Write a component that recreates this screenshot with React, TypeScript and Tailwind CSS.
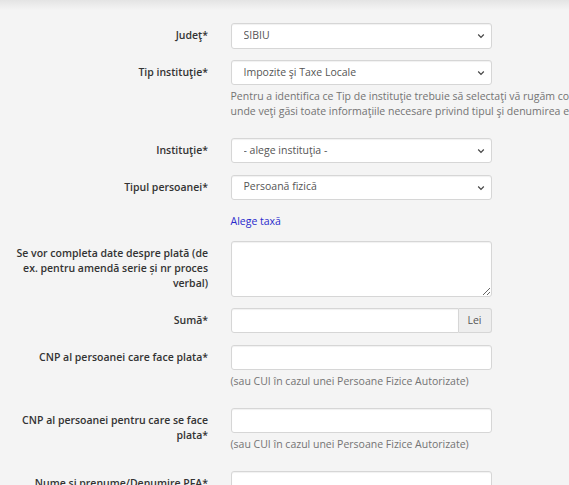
import React from 'react';

const font = { fontFamily: '"Open Sans", "Liberation Sans", sans-serif' };

function Chevron() {
    return (
        <svg
            className="pointer-events-none absolute right-[7px] top-[10px]"
            width="8"
            height="6"
            viewBox="0 0 8 6"
            fill="none"
        >
            <path d="M1.2 1.5 L4 4.3 L6.8 1.5" stroke="#444" strokeWidth="1.2" />
        </svg>
    );
}

function Label({ children }: { children: React.ReactNode }) {
    return (
        <label className="ml-[16px] w-[192px] shrink-0 pt-[5.25px] text-right text-[10.5px] leading-[15px] font-semibold text-[#333]">
            {children}
        </label>
    );
}

const field =
    'block rounded-[3px] border border-[#d6d6d6] bg-white text-[10.5px] text-[#555] shadow-[inset_0_1px_1px_rgba(0,0,0,0.06)] outline-none';

function SelectBox({ value }: { value: string }) {
    return (
        <div className="relative w-[261px]">
            <select className={`h-[25.5px] w-full appearance-none pl-[12px] ${field}`} defaultValue={value}>
                <option>{value}</option>
            </select>
            <Chevron />
        </div>
    );
}

function TextInput() {
    return <input type="text" className={`h-[25.5px] w-[261px] px-[9px] ${field}`} />;
}

function Help({ children }: { children: React.ReactNode }) {
    return (
        <p className="mt-[3.75px] mb-[7.5px] whitespace-nowrap text-[10.5px] leading-[15px] text-[#737373]">
            {children}
        </p>
    );
}

function Row({ label, children }: { label?: React.ReactNode; children: React.ReactNode }) {
    return (
        <div className="mb-[11.25px] flex gap-[22.5px]">
            {label ? <Label>{label}</Label> : <div className="ml-[16px] w-[192px] shrink-0" />}
            <div className="flex flex-col">{children}</div>
        </div>
    );
}

export default function App() {
    return (
        <div className="h-[485px] w-[569px] overflow-hidden bg-[#f4f4f4]" style={font}>
            <div className="h-[10px] bg-gradient-to-b from-[#e4e4e4] to-[#f4f4f4]" />
            <form className="flex flex-col pt-[13px]">
                <Row label="Judeţ*">
                    <SelectBox value="SIBIU" />
                </Row>

                <Row label="Tip instituţie*">
                    <SelectBox value="Impozite şi Taxe Locale" />
                    <Help>
                        Pentru a identifica ce Tip de instituţie trebuie să selectaţi vă rugăm consultaţi lista
                        <br />
                        unde veţi găsi toate informaţiile necesare privind tipul şi denumirea exactă a instituţiei.
                    </Help>
                </Row>

                <Row label="Instituţie*">
                    <SelectBox value="- alege instituţia -" />
                </Row>

                <Row label="Tipul persoanei*">
                    <SelectBox value="Persoană fizică" />
                </Row>

                <Row>
                    <a href="#" className="pt-[3px] text-[10.5px] leading-[15px] text-[#2a2acc]">
                        Alege taxă
                    </a>
                </Row>

                <Row label="Se vor completa date despre plată (de ex. pentru amendă serie și nr proces verbal)">
                    <textarea className={`h-[56px] w-[261px] px-[9px] py-[4px] ${field}`} />
                </Row>

                <Row label="Sumă*">
                    <div className="flex h-[25.5px] w-[261px]">
                        <input
                            type="text"
                            className="h-full min-w-0 flex-1 rounded-l-[3px] border border-[#d6d6d6] bg-white px-[9px] text-[10.5px] shadow-[inset_0_1px_1px_rgba(0,0,0,0.06)] outline-none"
                        />
                        <span className="flex w-[33px] items-center justify-center rounded-r-[3px] border border-l-0 border-[#d6d6d6] bg-[#eeeeee] text-[10.5px] text-[#555]">
                            Lei
                        </span>
                    </div>
                </Row>

                <Row label="CNP al persoanei care face plata*">
                    <TextInput />
                    <Help>(sau CUI în cazul unei Persoane Fizice Autorizate)</Help>
                </Row>

                <Row label="CNP al persoanei pentru care se face plata*">
                    <TextInput />
                    <Help>(sau CUI în cazul unei Persoane Fizice Autorizate)</Help>
                </Row>

                <Row label="Nume şi prenume/Denumire PFA*">
                    <TextInput />
                </Row>
            </form>
        </div>
    );
}
